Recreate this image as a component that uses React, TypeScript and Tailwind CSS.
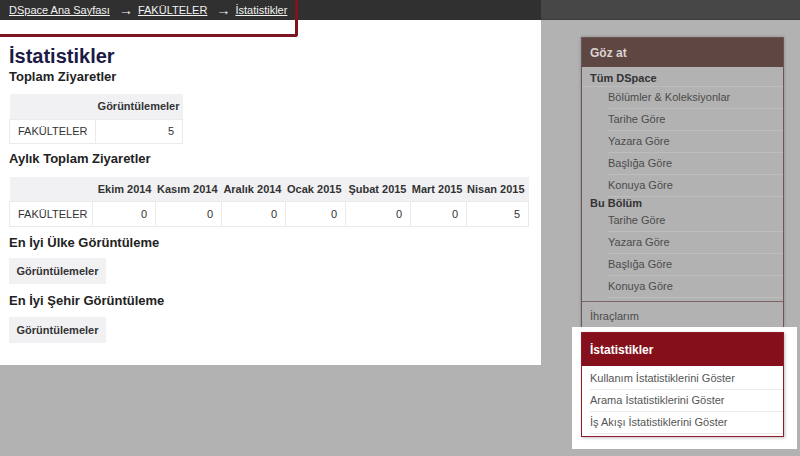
import React from "react";

const months = [
  "Ekim 2014",
  "Kasım 2014",
  "Aralık 2014",
  "Ocak 2015",
  "Şubat 2015",
  "Mart 2015",
  "Nisan 2015",
];
const monthViews = [0, 0, 0, 0, 0, 0, 5];
const monthWidths = ["w-[63px]", "w-[66px]", "w-[64px]", "w-[60px]", "w-[65px]", "w-[56px]", "w-[62px]"];

const allLinks = ["Bölümler & Koleksiyonlar", "Tarihe Göre", "Yazara Göre", "Başlığa Göre", "Konuya Göre"];
const sectionLinks = ["Tarihe Göre", "Yazara Göre", "Başlığa Göre", "Konuya Göre"];
const statLinks = [
  "Kullanım İstatistiklerini Göster",
  "Arama İstatistiklerini Göster",
  "İş Akışı İstatistiklerini Göster",
];

const SideLink = ({ label }: { label: string }) => (
  <div className="ml-[26px] h-[22px] border-b border-[#bdbdbd] flex items-center text-[11px] text-[#4b4b4b]">
    {label}
  </div>
);

const App: React.FC = () => {
  return (
    <div
      className="relative w-[800px] h-[456px] overflow-hidden bg-[#b2b2b2]"
      style={{ fontFamily: '"Liberation Sans", Arial, sans-serif' }}
    >
      {/* üst bar */}
      <div className="flex h-[20px]">
        <div className="w-[541px] bg-[#303030] flex items-center pl-[9px] gap-[5px] text-[11px] text-[#f2f2f2] whitespace-nowrap">
          <span className="underline">DSpace Ana Sayfası</span>
          <span className="text-[14px] leading-none ml-[4px]">→</span>
          <span className="underline">FAKÜLTELER</span>
          <span className="text-[14px] leading-none ml-[4px]">→</span>
          <span className="underline">İstatistikler</span>
        </div>
        <div className="flex-1 bg-[#474747] border-b border-[#3c3c3c]" />
      </div>

      <div className="flex">
        {/* içerik */}
        <div className="w-[541px] h-[345px] bg-white pl-[9px] text-[#333]">
          <h1 className="text-[20px] font-bold leading-none text-[#1b1b45] mt-[26px]">İstatistikler</h1>
          <h3 className="text-[13px] font-bold text-[#222] leading-none mt-[4px]">Toplam Ziyaretler</h3>

          <table className="mt-[11px] border-collapse table-fixed text-[11px] whitespace-nowrap">
            <tbody>
              <tr className="h-[25px] bg-[#f1f1f4]">
                <th className="w-[86px]" />
                <th className="w-[87px] text-right pr-[3px] font-bold text-[#333]">Görüntülemeler</th>
              </tr>
              <tr className="h-[24px]">
                <td className="border border-[#eaeaee] pl-[8px] text-[#333]">FAKÜLTELER</td>
                <td className="border border-[#eaeaee] text-right pr-[8px] text-[#333]">5</td>
              </tr>
            </tbody>
          </table>

          <h3 className="text-[13px] font-bold text-[#222] leading-none mt-[8px]">Aylık Toplam Ziyaretler</h3>

          <table className="mt-[12px] border-collapse table-fixed text-[11px] whitespace-nowrap">
            <tbody>
              <tr className="h-[25px] bg-[#f1f1f4]">
                <th className="w-[83px]" />
                {months.map((m, i) => (
                  <th key={m} className={`${monthWidths[i]} text-right pr-[4px] font-bold text-[#333]`}>
                    {m}
                  </th>
                ))}
              </tr>
              <tr className="h-[25px]">
                <td className="border border-[#eaeaee] pl-[8px] text-[#333]">FAKÜLTELER</td>
                {monthViews.map((v, i) => (
                  <td key={i} className="border border-[#eaeaee] text-right pr-[8px] text-[#333]">
                    {v}
                  </td>
                ))}
              </tr>
            </tbody>
          </table>

          <h3 className="text-[13px] font-bold text-[#222] leading-none mt-[9px]">En İyi Ülke Görüntüleme</h3>
          <div className="mt-[9px] w-[97px] h-[26px] bg-[#f1f1f4] flex items-center justify-center text-[11px] font-bold text-[#333]">
            Görüntülemeler
          </div>

          <h3 className="text-[13px] font-bold text-[#222] leading-none mt-[10px]">En İyi Şehir Görüntüleme</h3>
          <div className="mt-[10px] w-[97px] h-[26px] bg-[#f1f1f4] flex items-center justify-center text-[11px] font-bold text-[#333]">
            Görüntülemeler
          </div>
        </div>

        {/* kenar çubuğu */}
        <div className="flex-1 pt-[17px]">
          <div className="ml-[40px] w-[203px] border border-[#6c5655] border-b-0 shadow-[0_0_3px_rgba(0,0,0,0.25)]">
            <div className="h-[29px] bg-[#5e4643] flex items-center pl-[8px] text-[12px] font-bold text-[#dcd3d3]">
              Göz at
            </div>
            <div className="pl-[8px] pt-[5px] h-[20px] border-b border-[#bdbdbd] text-[11px] font-bold text-[#333] leading-[13px]">
              Tüm DSpace
            </div>
            {allLinks.map((l, i) => (
              <SideLink key={i} label={l} />
            ))}
            <div className="pl-[8px] h-[13px] text-[11px] font-bold text-[#333] leading-[13px]">
              Bu Bölüm
            </div>
            {sectionLinks.map((l, i) => (
              <SideLink key={i} label={l} />
            ))}
            <div className="mt-[3px] border-t border-[#7a6464] h-[26px] flex items-center pl-[8px] pt-[3px] text-[11px] text-[#4b4b4b]">
              İhraçlarım
            </div>
          </div>

          {/* vurgulanan kutu */}
          <div className="ml-[31px] w-[225px] bg-white pt-[5px] pl-[9px] pr-[13px] pb-[12px]">
            <div className="border border-[#8c1c27] bg-white shadow-[1px_1px_3px_rgba(0,0,0,0.25)]">
              <div className="h-[33px] bg-[#85101b] flex items-center pl-[8px] text-[12px] font-bold text-white">
                İstatistikler
              </div>
              <div className="pl-[8px] pt-[2px] pb-[2px]">
                {statLinks.map((l) => (
                  <div key={l} className="h-[22px] border-b border-[#ebebeb] flex items-center text-[11px] text-[#555]">
                    {l}
                  </div>
                ))}
              </div>
            </div>
          </div>
        </div>
      </div>

      {/* breadcrumb vurgusu */}
      <div className="absolute left-0 top-0 w-[298px] h-[37px] border-r-[3px] border-b-[3px] border-[#7b1522] rounded-br-[3px]" />
    </div>
  );
};

export default App;
